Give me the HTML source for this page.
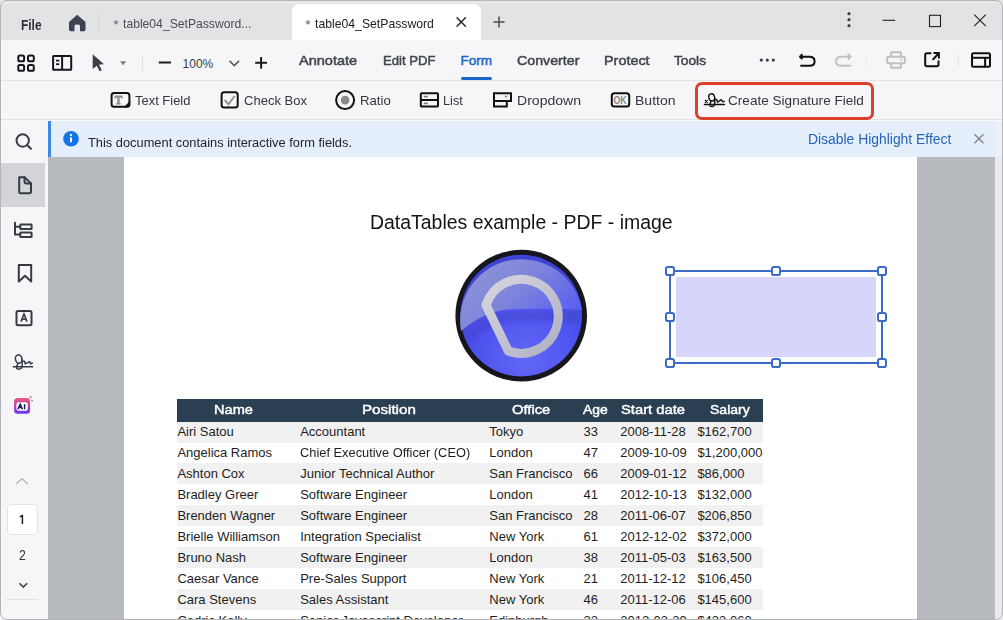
<!DOCTYPE html>
<html><head><meta charset="utf-8">
<style>
*{box-sizing:border-box;margin:0;padding:0}
html,body{width:1003px;height:620px;overflow:hidden;background:#fff;font-family:"Liberation Sans",sans-serif}
.a{position:absolute}
.t{position:absolute;white-space:nowrap;transform-origin:0 0}
#win{position:absolute;left:0;top:0;width:1003px;height:620px;overflow:hidden}
#title{left:0;top:0;width:1003px;height:40px;background:#e2e3e5}
#tband{left:0;top:1px;width:1003px;height:3px;background:#e7e8ea}
#tab{left:292px;top:4px;width:189px;height:36px;background:#fff;border-radius:7px 7px 0 0}
#tb1{left:0;top:40px;width:1003px;height:41px;background:#f6f6f8;border-bottom:1px solid #e4e4e7}
#tb2{left:0;top:81px;width:1003px;height:39px;background:#f6f6f8;border-bottom:1px solid #e2e2e5}
#tb2l{left:0;top:120px;width:1003px;height:1px;background:#fafafc}
#side{left:0;top:121px;width:48px;height:499px;background:#f6f6f8}
#sel{left:0;top:163px;width:45px;height:44px;background:#d3d4d7}
#istrip{left:996px;top:121px;width:7px;height:36px;background:#eef2f8}
#info{left:48px;top:121px;width:948px;height:36px;background:#e5effb;border-left:3px solid #3a87e6}
#doc{left:48px;top:157px;width:947px;height:463px;background:#b7babe}
#rstrip{left:995px;top:157px;width:8px;height:463px;background:#e9eaec}
#page{left:124px;top:157px;width:793px;height:463px;background:#fff}
#redbox{left:695.3px;top:82px;width:178.5px;height:37.6px;border:3.7px solid #de3f2b;border-radius:7px}
#uline{left:460.5px;top:76.8px;width:31.5px;height:3px;background:#1b66c9;border-radius:2px}
#frame{left:0;top:0;width:1003px;height:620px;border:1px solid #b3b4b7;border-radius:7px;pointer-events:none}
#p1{left:6.5px;top:503.5px;width:31px;height:31px;background:#fff;border:1px solid #e3e3e6;border-radius:4px}
#sdiv{left:6px;top:598.5px;width:32px;height:1px;background:#e3e3e6}
#thead{left:177px;top:399px;width:586px;height:22.5px;background:#2b3f53}
.stripe{position:absolute;left:177px;width:586px;height:21px;background:#f1f1f1}
svg{position:absolute;overflow:visible}
</style></head><body>
<div id="win">
<div class="a" id="title"></div>
<div class="a" id="tband"></div>
<div class="a" id="tab"></div>
<div class="a" id="tb1"></div>
<div class="a" id="tb2"></div>
<div class="a" id="tb2l"></div>
<div class="a" id="side"></div>
<div class="a" id="sel"></div>
<div class="a" id="istrip"></div>
<div class="a" id="info"></div>
<div class="a" id="doc"></div>
<div class="a" id="rstrip"></div>
<div class="a" id="page"></div>
<div class="a" id="redbox"></div>
<div class="a" id="uline"></div>
<div class="a" id="p1"></div>
<div class="a" id="sdiv"></div>
<div class="a" id="thead"></div>
<div class="stripe" style="top:421.5px"></div>
<div class="stripe" style="top:463px"></div>
<div class="stripe" style="top:505px"></div>
<div class="stripe" style="top:547px"></div>
<div class="stripe" style="top:589px"></div>

<svg width="1003" height="620" style="left:0;top:0" viewBox="0 0 1003 620">
<!-- title bar icons -->
<path d="M77.2 14.8 L85.5 22 L85.5 29.5 Q85.5 31.2 83.8 31.2 L80 31.2 L80 26 Q80 24.5 78.5 24.5 L76 24.5 Q74.5 24.5 74.5 26 L74.5 31.2 L70.7 31.2 Q69 31.2 69 29.5 L69 22 Z" fill="#3d4350"/>
<line x1="98.5" y1="12" x2="98.5" y2="32" stroke="#d6d7da" stroke-width="1"/>
<g stroke="#222" stroke-width="1.4" stroke-linecap="round"><line x1="457" y1="17.8" x2="465.4" y2="26.2"/><line x1="465.4" y1="17.8" x2="457" y2="26.2"/></g>
<g stroke="#555" stroke-width="1.6"><line x1="493.5" y1="22" x2="504.5" y2="22"/><line x1="499" y1="16.5" x2="499" y2="27.5"/></g>
<g fill="#444"><circle cx="849" cy="13.7" r="1.6"/><circle cx="849" cy="19.7" r="1.6"/><circle cx="849" cy="25.7" r="1.6"/></g>
<line x1="882.6" y1="20.3" x2="895.2" y2="20.3" stroke="#222" stroke-width="1.1"/>
<rect x="929.5" y="15.3" width="11" height="11.3" fill="none" stroke="#222" stroke-width="1.1"/>
<g stroke="#222" stroke-width="1.1"><line x1="974.2" y1="14.7" x2="985.8" y2="26.2"/><line x1="985.8" y1="14.7" x2="974.2" y2="26.2"/></g>

<!-- toolbar 1 icons -->
<g fill="none" stroke="#15171c" stroke-width="2">
<rect x="18.3" y="55.5" width="5.8" height="5.8" rx="1.6"/><rect x="28" y="55.5" width="5.8" height="5.8" rx="1.6"/>
<rect x="18.3" y="65" width="5.8" height="5.8" rx="1.6"/><rect x="28" y="65" width="5.8" height="5.8" rx="1.6"/>
<rect x="53.1" y="56" width="18.1" height="13.7" rx="0.5"/>
<line x1="62.1" y1="56" x2="62.1" y2="69.7"/>
</g>
<g stroke="#15171c" stroke-width="1.8"><line x1="56" y1="60.6" x2="59.3" y2="60.6"/><line x1="56" y1="64.2" x2="59.3" y2="64.2"/></g>
<path d="M92.7 54.2 L104 64.2 L99 64.6 L101.8 70.2 L99.6 71.3 L96.8 65.7 L92.7 69 Z" fill="#3b3f4a"/>
<path d="M120 61.3 L126.2 61.3 L123.1 65.2 Z" fill="#7a7c80"/>
<line x1="142.5" y1="55.5" x2="142.5" y2="71" stroke="#e2e2e5" stroke-width="1"/>
<line x1="158.8" y1="62.5" x2="171" y2="62.5" stroke="#1b1c20" stroke-width="2"/>
<path d="M229.6 60.9 L234.3 65.6 L239 60.9" fill="none" stroke="#55585e" stroke-width="1.5"/>
<g stroke="#1b1c20" stroke-width="2"><line x1="255.2" y1="62.8" x2="267" y2="62.8"/><line x1="261.1" y1="57" x2="261.1" y2="68.7"/></g>
<g fill="#3a3d44"><circle cx="761.3" cy="60.1" r="1.6"/><circle cx="767.3" cy="60.1" r="1.6"/><circle cx="773.3" cy="60.1" r="1.6"/></g>
<path d="M802.4 54.3 L800 56.7 L802.4 59.1 M800.4 56.7 L809.5 56.7 Q814.6 56.7 814.6 61.2 Q814.6 65.8 809.5 65.8 L800.3 65.8" fill="none" stroke="#111" stroke-width="2" stroke-linecap="butt" stroke-linejoin="round"/>
<path d="M848.3 54.3 L850.7 56.7 L848.3 59.1 M850.3 56.7 L841.2 56.7 Q836.1 56.7 836.1 61.2 Q836.1 65.8 841.2 65.8 L850.4 65.8" fill="none" stroke="#c3c3c5" stroke-width="2" stroke-linecap="round" stroke-linejoin="round"/>
<line x1="866" y1="55" x2="866" y2="67" stroke="#e6e6e9" stroke-width="1"/><circle cx="901" cy="59.6" r="1" fill="#c0c0c2"/>
<g fill="none" stroke="#c0c0c2" stroke-width="2" stroke-linejoin="round">
<path d="M891.2 56.5 L891.2 52.3 L900.9 52.3 L900.9 56.5"/>
<path d="M890.5 63.3 L888.8 63.3 Q887.2 63.3 887.2 61.7 L887.2 58.3 Q887.2 56.7 888.8 56.7 L903.2 56.7 Q904.8 56.7 904.8 58.3 L904.8 61.7 Q904.8 63.3 903.2 63.3 L901.5 63.3"/>
<rect x="891.2" y="63.2" width="9.7" height="4.5"/>
</g>
<path d="M930.6 53.2 L926.8 53.2 Q925.2 53.2 925.2 54.8 L925.2 64.6 Q925.2 66.2 926.8 66.2 L936.9 66.2 Q938.5 66.2 938.5 64.6 L938.5 61.2 M933.2 59.2 L938.6 53.4 M934.2 53 L938.9 53 L938.9 57.8" fill="none" stroke="#111" stroke-width="2" stroke-linecap="round" stroke-linejoin="round"/>
<line x1="958.3" y1="54" x2="958.3" y2="67" stroke="#e6e6e9" stroke-width="1"/>
<g fill="none" stroke="#111" stroke-width="2"><rect x="972" y="53.2" width="18" height="13.5" rx="1.5"/><line x1="972" y1="57.8" x2="990" y2="57.8"/><line x1="985.1" y1="57.8" x2="985.1" y2="66.7"/></g>

<!-- toolbar 2 icons -->
<g fill="none" stroke="#111" stroke-width="2">
<rect x="111.6" y="93" width="17.8" height="13.7" rx="2.5"/>
<rect x="221.6" y="92.3" width="16.1" height="15.2" rx="2.5"/>
<circle cx="345.1" cy="100.1" r="9"/>
<rect x="420.8" y="93.3" width="17.2" height="13.2" rx="0.8"/><line x1="420.8" y1="100" x2="438" y2="100"/>
<path d="M494 101 L494 93.3 L511 93.3 L511 101 L494 101 L494 106.5 L506.8 106.5 L506.8 101"/>
<rect x="611.8" y="93.3" width="17.4" height="13.2" rx="2.5"/>
</g>
<path d="M123.8 107.2 L130.2 100.8 L130.2 105 Q130.2 107.2 128 107.2 Z" fill="#111"/>
<path d="M114.4 95.4 L122.5 95.4 L122.5 98.6 L121.3 98.6 L121 97.6 L119.6 97.6 L119.6 103 L120.7 103.3 L120.7 104.6 L116.2 104.6 L116.2 103.3 L117.3 103 L117.3 97.6 L115.9 97.6 L115.6 98.6 L114.4 98.6 Z" fill="#8a8a8a"/>
<path d="M224.6 100 L228.5 104.2 L234.6 96" fill="none" stroke="#8f8f8f" stroke-width="1.9"/>
<circle cx="345.1" cy="100.1" r="4.3" fill="#8a8a8a"/>
<g stroke="#777" stroke-width="1.6"><line x1="423.8" y1="96.6" x2="427.8" y2="96.6"/><line x1="423.8" y1="103.4" x2="427.8" y2="103.4"/></g>
<path d="M504.2 95.8 L507.8 95.8 L506 97.8 Z" fill="#777"/>
<text x="613.5" y="103.9" font-family="Liberation Sans" font-weight="bold" font-size="10.4" fill="#888" textLength="13.2" lengthAdjust="spacingAndGlyphs">OK</text>
<g fill="none" stroke="#111" stroke-width="1.3" stroke-linecap="round">
<line x1="704.5" y1="104.5" x2="724.4" y2="104.5" stroke-width="1.6"/>
<path d="M705.3 100.4 L707.3 102.4 M707.3 100.4 L705.3 102.4" stroke-width="1.3"/>
<ellipse cx="711.7" cy="97.4" rx="2.9" ry="3.7" transform="rotate(-15 711.7 97.4)" stroke-width="1.4"/><path d="M714.6 98.5 L714.8 104 Q714.5 106.6 711.8 106.5 Q709.5 106.3 709.8 104.6 Q710.2 102.6 711.3 101.1 M714.8 99.5 L716.6 99.5 L717.6 102.2 L721.3 99.6 L722.9 101.8 L724.2 101.3" stroke-width="1.4" stroke-linejoin="round"/>
</g>

<!-- info bar -->
<circle cx="71" cy="138.8" r="7.8" fill="#1473e6"/>
<rect x="70" y="137.3" width="2" height="5" rx="0.5" fill="#fff"/><circle cx="71" cy="135" r="1.15" fill="#fff"/>
<g stroke="#7d8089" stroke-width="1.3"><line x1="974.5" y1="134.3" x2="983.5" y2="143.3"/><line x1="983.5" y1="134.3" x2="974.5" y2="143.3"/></g>

<!-- sidebar icons -->
<g fill="none" stroke="#363a43" stroke-width="2" stroke-linecap="round" stroke-linejoin="round">
<circle cx="22.7" cy="140.5" r="6.2"/><line x1="27.3" y1="145.2" x2="31" y2="148.8"/>
<path d="M19.2 177.3 L24.5 177.3 L31 183.5 L31 192 Q31 193.2 29.8 193.2 L20.4 193.2 Q19.2 193.2 19.2 192 Z"/>
<path d="M24.5 177.3 L24.5 181.5 Q24.5 183.5 26.5 183.5 L31 183.5"/>
<path d="M15 222.7 L15 234.6 L19.8 234.6 M15 226.8 L19.8 226.8"/>
<rect x="20.3" y="224.6" width="11.3" height="4.4" rx="0.5"/><rect x="20.3" y="232.6" width="11.3" height="4.4" rx="0.5"/>
<path d="M18.8 265 L31.2 265 L31.2 281.5 L25 275.7 L18.8 281.5 Z"/>
<rect x="16.5" y="311" width="15" height="14.2" rx="1.5"/>
</g>
<path d="M21 321.6 L24 313.9 L27 321.6 M22 319.3 L26 319.3" fill="none" stroke="#363a43" stroke-width="1.6"/>
<g fill="none" stroke="#363a43" stroke-width="1.5" stroke-linecap="round">
<line x1="13.4" y1="366.7" x2="32.6" y2="366.7"/>
<ellipse cx="18.7" cy="359" rx="3.3" ry="4.2" transform="rotate(-12 18.7 359)"/><path d="M21.9 359.5 L22.2 365.5 Q21.9 369.3 18.6 369.2 Q16.2 369 16.5 367 Q16.9 365 18.3 363.2 M22.2 361.2 L24.6 361.2 L25.2 363.8 L29.5 361.7 L30.6 363.8 L32.3 363" stroke-linejoin="round"/>
</g>
<defs><linearGradient id="aig" x1="0" y1="0" x2="0" y2="1"><stop offset="0" stop-color="#ee5a7a"/><stop offset="1" stop-color="#6a35f0"/></linearGradient>
<radialGradient id="blu" cx="0.5" cy="0.75" r="0.6"><stop offset="0" stop-color="#5d63f2"/><stop offset="0.7" stop-color="#4f55ea"/><stop offset="1" stop-color="#4247d8"/></radialGradient><linearGradient id="cap" x1="0" y1="0" x2="0" y2="1"><stop offset="0" stop-color="#7a84e6"/><stop offset="1" stop-color="#7a82cf"/></linearGradient>
<linearGradient id="dg" x1="0" y1="0" x2="1" y2="1"><stop offset="0" stop-color="#d6d6e0"/><stop offset="1" stop-color="#b0b0c4"/></linearGradient>
</defs>
<rect x="14.1" y="398.1" width="16" height="15.6" rx="3.5" fill="url(#aig)"/>
<rect x="16.4" y="402.2" width="11.4" height="8.6" rx="2.2" fill="#fff"/>
<path d="M18 409.2 L20.2 404.2 L22.4 409.2 M19 407.5 L21.4 407.5 M24.6 404.2 L24.6 409.2" fill="none" stroke="#1a1d5e" stroke-width="1.5"/>
<path d="M30.6 395.3 L31.1 396.6 L32.4 397.1 L31.1 397.6 L30.6 398.9 L30.1 397.6 L28.8 397.1 L30.1 396.6 Z" fill="#d8708f"/>
<circle cx="32" cy="400.8" r="0.8" fill="#6a5aa8"/>
<path d="M16.2 484 L22 478.7 L27.8 484" fill="none" stroke="#b7b8bb" stroke-width="1.4"/>
<path d="M19.4 583.2 L23.3 587.1 L27.2 583.2" fill="none" stroke="#444" stroke-width="1.5"/>
<path d="M19.9 516.9 L22.4 515.3 L22.4 523.9" fill="none" stroke="#1e1e1e" stroke-width="1.5" stroke-linejoin="round"/>

<!-- logo -->
<defs>
<filter id="bl2" x="-20%" y="-20%" width="140%" height="140%"><feGaussianBlur stdDeviation="2.5"/></filter>
<filter id="bl1" x="-5%" y="-5%" width="110%" height="110%"><feGaussianBlur stdDeviation="0.6"/></filter>
<linearGradient id="cap2" x1="0" y1="0" x2="1" y2="0.6"><stop offset="0" stop-color="#9298d2"/><stop offset="0.55" stop-color="#7c84dc"/><stop offset="1" stop-color="#5a60f0"/></linearGradient>
<radialGradient id="low" cx="0.55" cy="0.85" r="0.7"><stop offset="0" stop-color="#6268f6"/><stop offset="0.6" stop-color="#4e52ee"/><stop offset="1" stop-color="#4044d6"/></radialGradient>
</defs>
<circle cx="521.2" cy="315.6" r="65.8" fill="#17171c" filter="url(#bl1)"/>
<circle cx="521.2" cy="315.6" r="60.8" fill="url(#low)"/>
<path d="M461 331 Q488 308 520 309 Q556 308 582 310 A60.8 60.8 0 0 0 461 331 Z" fill="url(#cap2)"/>
<path d="M468 338 Q492 315 520 316 Q554 315 578 318" fill="none" stroke="#3a40b8" stroke-width="8" opacity="0.4" filter="url(#bl2)"/>
<path d="M508.3 351 L486 305 A37 37 0 1 1 508.3 351 Z" fill="none" stroke="url(#dg)" stroke-width="9" stroke-linejoin="round"/>

<!-- signature field -->
<rect x="676" y="277" width="200" height="80" fill="#d6d6fa"/>
<rect x="670" y="271" width="212" height="92" fill="none" stroke="#3d6bc6" stroke-width="2"/>
<g fill="#fff" stroke="#3d6bc6" stroke-width="2">
<rect x="666" y="267" width="8" height="8" rx="1.8"/><rect x="772" y="267" width="8" height="8" rx="1.8"/><rect x="878" y="267" width="8" height="8" rx="1.8"/>
<rect x="666" y="313" width="8" height="8" rx="1.8"/><rect x="878" y="313" width="8" height="8" rx="1.8"/>
<rect x="666" y="359" width="8" height="8" rx="1.8"/><rect x="772" y="359" width="8" height="8" rx="1.8"/><rect x="878" y="359" width="8" height="8" rx="1.8"/>
</g>
</svg>
<div class="t" style="left:20.50px;top:18.35px;font-size:14px;line-height:14px;color:#2d3038;font-weight:bold;transform:scaleX(0.8500);">File</div>
<div class="t" style="left:112.80px;top:18.20px;font-size:13px;line-height:13px;color:#6a6d73;transform:scaleX(1.1465);">*</div>
<div class="t" style="left:123.10px;top:17.04px;font-size:13.3px;line-height:13.3px;color:#4b4e55;transform:scaleX(0.9143);">table04_SetPassword...</div>
<div class="t" style="left:304.90px;top:18.20px;font-size:13px;line-height:13px;color:#66686c;transform:scaleX(1.1465);">*</div>
<div class="t" style="left:315.10px;top:17.04px;font-size:13.3px;line-height:13.3px;color:#202124;transform:scaleX(0.9191);">table04_SetPassword</div>
<div class="t" style="left:182.60px;top:57.94px;font-size:12px;line-height:12px;color:#3c3f46;">100%</div>
<div class="t" style="left:299.20px;top:53.57px;font-size:13.5px;line-height:13.5px;color:#41454e;transform:scaleX(1.0769);-webkit-text-stroke:0.5px #41454e;">Annotate</div>
<div class="t" style="left:382.50px;top:53.57px;font-size:13.5px;line-height:13.5px;color:#41454e;transform:scaleX(0.9701);-webkit-text-stroke:0.5px #41454e;">Edit PDF</div>
<div class="t" style="left:460.60px;top:53.57px;font-size:13.5px;line-height:13.5px;color:#1b66c9;-webkit-text-stroke:0.5px #1b66c9;">Form</div>
<div class="t" style="left:517.00px;top:53.57px;font-size:13.5px;line-height:13.5px;color:#41454e;transform:scaleX(1.0527);-webkit-text-stroke:0.5px #41454e;">Converter</div>
<div class="t" style="left:604.00px;top:53.57px;font-size:13.5px;line-height:13.5px;color:#41454e;transform:scaleX(1.0662);-webkit-text-stroke:0.5px #41454e;">Protect</div>
<div class="t" style="left:674.00px;top:53.57px;font-size:13.5px;line-height:13.5px;color:#41454e;transform:scaleX(1.0154);-webkit-text-stroke:0.5px #41454e;">Tools</div>
<div class="t" style="left:135.00px;top:93.77px;font-size:13.5px;line-height:13.5px;color:#34363b;transform:scaleX(0.9590);">Text Field</div>
<div class="t" style="left:243.60px;top:93.77px;font-size:13.5px;line-height:13.5px;color:#34363b;transform:scaleX(0.9651);">Check Box</div>
<div class="t" style="left:359.80px;top:93.77px;font-size:13.5px;line-height:13.5px;color:#34363b;transform:scaleX(0.9741);">Ratio</div>
<div class="t" style="left:443.30px;top:93.77px;font-size:13.5px;line-height:13.5px;color:#34363b;transform:scaleX(0.9473);">List</div>
<div class="t" style="left:516.50px;top:93.77px;font-size:13.5px;line-height:13.5px;color:#34363b;transform:scaleX(1.0417);">Dropdown</div>
<div class="t" style="left:634.90px;top:93.77px;font-size:13.5px;line-height:13.5px;color:#34363b;transform:scaleX(1.0377);">Button</div>
<div class="t" style="left:727.90px;top:93.77px;font-size:13.5px;line-height:13.5px;color:#34363b;transform:scaleX(1.0061);">Create Signature Field</div>
<div class="t" style="left:87.60px;top:136.62px;font-size:12.5px;line-height:12.5px;color:#23262b;transform:scaleX(1.0270);">This document contains interactive form fields.</div>
<div class="t" style="left:807.80px;top:132.35px;font-size:14px;line-height:14px;color:#2665b5;transform:scaleX(0.9918);">Disable Highlight Effect</div>
<div class="t" style="left:18.60px;top:546.50px;font-size:15px;line-height:15px;color:#333;transform:scaleX(0.8151);">2</div>
<div class="t" style="left:370.00px;top:211.67px;font-size:20px;line-height:20px;color:#141414;transform:scaleX(0.9723);">DataTables example - PDF - image</div>
<div class="t" style="left:213.90px;top:403.17px;font-size:13.5px;line-height:13.5px;color:#ffffff;transform:scaleX(1.0802);-webkit-text-stroke:0.45px #fff;">Name</div>
<div class="t" style="left:362.00px;top:403.17px;font-size:13.5px;line-height:13.5px;color:#ffffff;transform:scaleX(1.1202);-webkit-text-stroke:0.45px #fff;">Position</div>
<div class="t" style="left:511.50px;top:403.17px;font-size:13.5px;line-height:13.5px;color:#ffffff;transform:scaleX(1.0938);-webkit-text-stroke:0.45px #fff;">Office</div>
<div class="t" style="left:583.30px;top:403.17px;font-size:13.5px;line-height:13.5px;color:#ffffff;transform:scaleX(1.0325);-webkit-text-stroke:0.45px #fff;">Age</div>
<div class="t" style="left:621.00px;top:403.17px;font-size:13.5px;line-height:13.5px;color:#ffffff;transform:scaleX(1.0934);-webkit-text-stroke:0.45px #fff;">Start date</div>
<div class="t" style="left:709.80px;top:403.17px;font-size:13.5px;line-height:13.5px;color:#ffffff;transform:scaleX(1.0401);-webkit-text-stroke:0.45px #fff;">Salary</div>
<div class="t" style="left:177.40px;top:425.10px;font-size:13px;line-height:13px;color:#1e1e1e;">Airi Satou</div>
<div class="t" style="left:300.20px;top:425.10px;font-size:13px;line-height:13px;color:#1e1e1e;">Accountant</div>
<div class="t" style="left:489.30px;top:425.10px;font-size:13px;line-height:13px;color:#1e1e1e;">Tokyo</div>
<div class="t" style="left:583.50px;top:425.10px;font-size:13px;line-height:13px;color:#1e1e1e;">33</div>
<div class="t" style="left:620.20px;top:425.10px;font-size:13px;line-height:13px;color:#1e1e1e;">2008-11-28</div>
<div class="t" style="left:697.40px;top:425.10px;font-size:13px;line-height:13px;color:#1e1e1e;">$162,700</div>
<div class="t" style="left:177.40px;top:446.10px;font-size:13px;line-height:13px;color:#1e1e1e;">Angelica Ramos</div>
<div class="t" style="left:300.20px;top:446.10px;font-size:13px;line-height:13px;color:#1e1e1e;transform:scaleX(0.9871);">Chief Executive Officer (CEO)</div>
<div class="t" style="left:489.30px;top:446.10px;font-size:13px;line-height:13px;color:#1e1e1e;">London</div>
<div class="t" style="left:583.50px;top:446.10px;font-size:13px;line-height:13px;color:#1e1e1e;">47</div>
<div class="t" style="left:620.20px;top:446.10px;font-size:13px;line-height:13px;color:#1e1e1e;">2009-10-09</div>
<div class="t" style="left:697.40px;top:446.10px;font-size:13px;line-height:13px;color:#1e1e1e;">$1,200,000</div>
<div class="t" style="left:177.40px;top:467.10px;font-size:13px;line-height:13px;color:#1e1e1e;">Ashton Cox</div>
<div class="t" style="left:300.20px;top:467.10px;font-size:13px;line-height:13px;color:#1e1e1e;">Junior Technical Author</div>
<div class="t" style="left:489.30px;top:467.10px;font-size:13px;line-height:13px;color:#1e1e1e;">San Francisco</div>
<div class="t" style="left:583.50px;top:467.10px;font-size:13px;line-height:13px;color:#1e1e1e;">66</div>
<div class="t" style="left:620.20px;top:467.10px;font-size:13px;line-height:13px;color:#1e1e1e;">2009-01-12</div>
<div class="t" style="left:697.40px;top:467.10px;font-size:13px;line-height:13px;color:#1e1e1e;">$86,000</div>
<div class="t" style="left:177.40px;top:488.10px;font-size:13px;line-height:13px;color:#1e1e1e;">Bradley Greer</div>
<div class="t" style="left:300.20px;top:488.10px;font-size:13px;line-height:13px;color:#1e1e1e;">Software Engineer</div>
<div class="t" style="left:489.30px;top:488.10px;font-size:13px;line-height:13px;color:#1e1e1e;">London</div>
<div class="t" style="left:583.50px;top:488.10px;font-size:13px;line-height:13px;color:#1e1e1e;">41</div>
<div class="t" style="left:620.20px;top:488.10px;font-size:13px;line-height:13px;color:#1e1e1e;">2012-10-13</div>
<div class="t" style="left:697.40px;top:488.10px;font-size:13px;line-height:13px;color:#1e1e1e;">$132,000</div>
<div class="t" style="left:177.40px;top:509.10px;font-size:13px;line-height:13px;color:#1e1e1e;">Brenden Wagner</div>
<div class="t" style="left:300.20px;top:509.10px;font-size:13px;line-height:13px;color:#1e1e1e;">Software Engineer</div>
<div class="t" style="left:489.30px;top:509.10px;font-size:13px;line-height:13px;color:#1e1e1e;">San Francisco</div>
<div class="t" style="left:583.50px;top:509.10px;font-size:13px;line-height:13px;color:#1e1e1e;">28</div>
<div class="t" style="left:620.20px;top:509.10px;font-size:13px;line-height:13px;color:#1e1e1e;">2011-06-07</div>
<div class="t" style="left:697.40px;top:509.10px;font-size:13px;line-height:13px;color:#1e1e1e;">$206,850</div>
<div class="t" style="left:177.40px;top:530.10px;font-size:13px;line-height:13px;color:#1e1e1e;">Brielle Williamson</div>
<div class="t" style="left:300.20px;top:530.10px;font-size:13px;line-height:13px;color:#1e1e1e;">Integration Specialist</div>
<div class="t" style="left:489.30px;top:530.10px;font-size:13px;line-height:13px;color:#1e1e1e;">New York</div>
<div class="t" style="left:583.50px;top:530.10px;font-size:13px;line-height:13px;color:#1e1e1e;">61</div>
<div class="t" style="left:620.20px;top:530.10px;font-size:13px;line-height:13px;color:#1e1e1e;">2012-12-02</div>
<div class="t" style="left:697.40px;top:530.10px;font-size:13px;line-height:13px;color:#1e1e1e;">$372,000</div>
<div class="t" style="left:177.40px;top:551.10px;font-size:13px;line-height:13px;color:#1e1e1e;">Bruno Nash</div>
<div class="t" style="left:300.20px;top:551.10px;font-size:13px;line-height:13px;color:#1e1e1e;">Software Engineer</div>
<div class="t" style="left:489.30px;top:551.10px;font-size:13px;line-height:13px;color:#1e1e1e;">London</div>
<div class="t" style="left:583.50px;top:551.10px;font-size:13px;line-height:13px;color:#1e1e1e;">38</div>
<div class="t" style="left:620.20px;top:551.10px;font-size:13px;line-height:13px;color:#1e1e1e;">2011-05-03</div>
<div class="t" style="left:697.40px;top:551.10px;font-size:13px;line-height:13px;color:#1e1e1e;">$163,500</div>
<div class="t" style="left:177.40px;top:572.10px;font-size:13px;line-height:13px;color:#1e1e1e;">Caesar Vance</div>
<div class="t" style="left:300.20px;top:572.10px;font-size:13px;line-height:13px;color:#1e1e1e;">Pre-Sales Support</div>
<div class="t" style="left:489.30px;top:572.10px;font-size:13px;line-height:13px;color:#1e1e1e;">New York</div>
<div class="t" style="left:583.50px;top:572.10px;font-size:13px;line-height:13px;color:#1e1e1e;">21</div>
<div class="t" style="left:620.20px;top:572.10px;font-size:13px;line-height:13px;color:#1e1e1e;">2011-12-12</div>
<div class="t" style="left:697.40px;top:572.10px;font-size:13px;line-height:13px;color:#1e1e1e;">$106,450</div>
<div class="t" style="left:177.40px;top:593.10px;font-size:13px;line-height:13px;color:#1e1e1e;">Cara Stevens</div>
<div class="t" style="left:300.20px;top:593.10px;font-size:13px;line-height:13px;color:#1e1e1e;">Sales Assistant</div>
<div class="t" style="left:489.30px;top:593.10px;font-size:13px;line-height:13px;color:#1e1e1e;">New York</div>
<div class="t" style="left:583.50px;top:593.10px;font-size:13px;line-height:13px;color:#1e1e1e;">46</div>
<div class="t" style="left:620.20px;top:593.10px;font-size:13px;line-height:13px;color:#1e1e1e;">2011-12-06</div>
<div class="t" style="left:697.40px;top:593.10px;font-size:13px;line-height:13px;color:#1e1e1e;">$145,600</div>
<div class="t" style="left:177.40px;top:614.10px;font-size:13px;line-height:13px;color:#1e1e1e;">Cedric Kelly</div>
<div class="t" style="left:300.20px;top:614.10px;font-size:13px;line-height:13px;color:#1e1e1e;">Senior Javascript Developer</div>
<div class="t" style="left:489.30px;top:614.10px;font-size:13px;line-height:13px;color:#1e1e1e;">Edinburgh</div>
<div class="t" style="left:583.50px;top:614.10px;font-size:13px;line-height:13px;color:#1e1e1e;">22</div>
<div class="t" style="left:620.20px;top:614.10px;font-size:13px;line-height:13px;color:#1e1e1e;">2012-03-29</div>
<div class="t" style="left:697.40px;top:614.10px;font-size:13px;line-height:13px;color:#1e1e1e;">$433,060</div>
<div class="a" id="frame"></div>
</div>
</body></html>
